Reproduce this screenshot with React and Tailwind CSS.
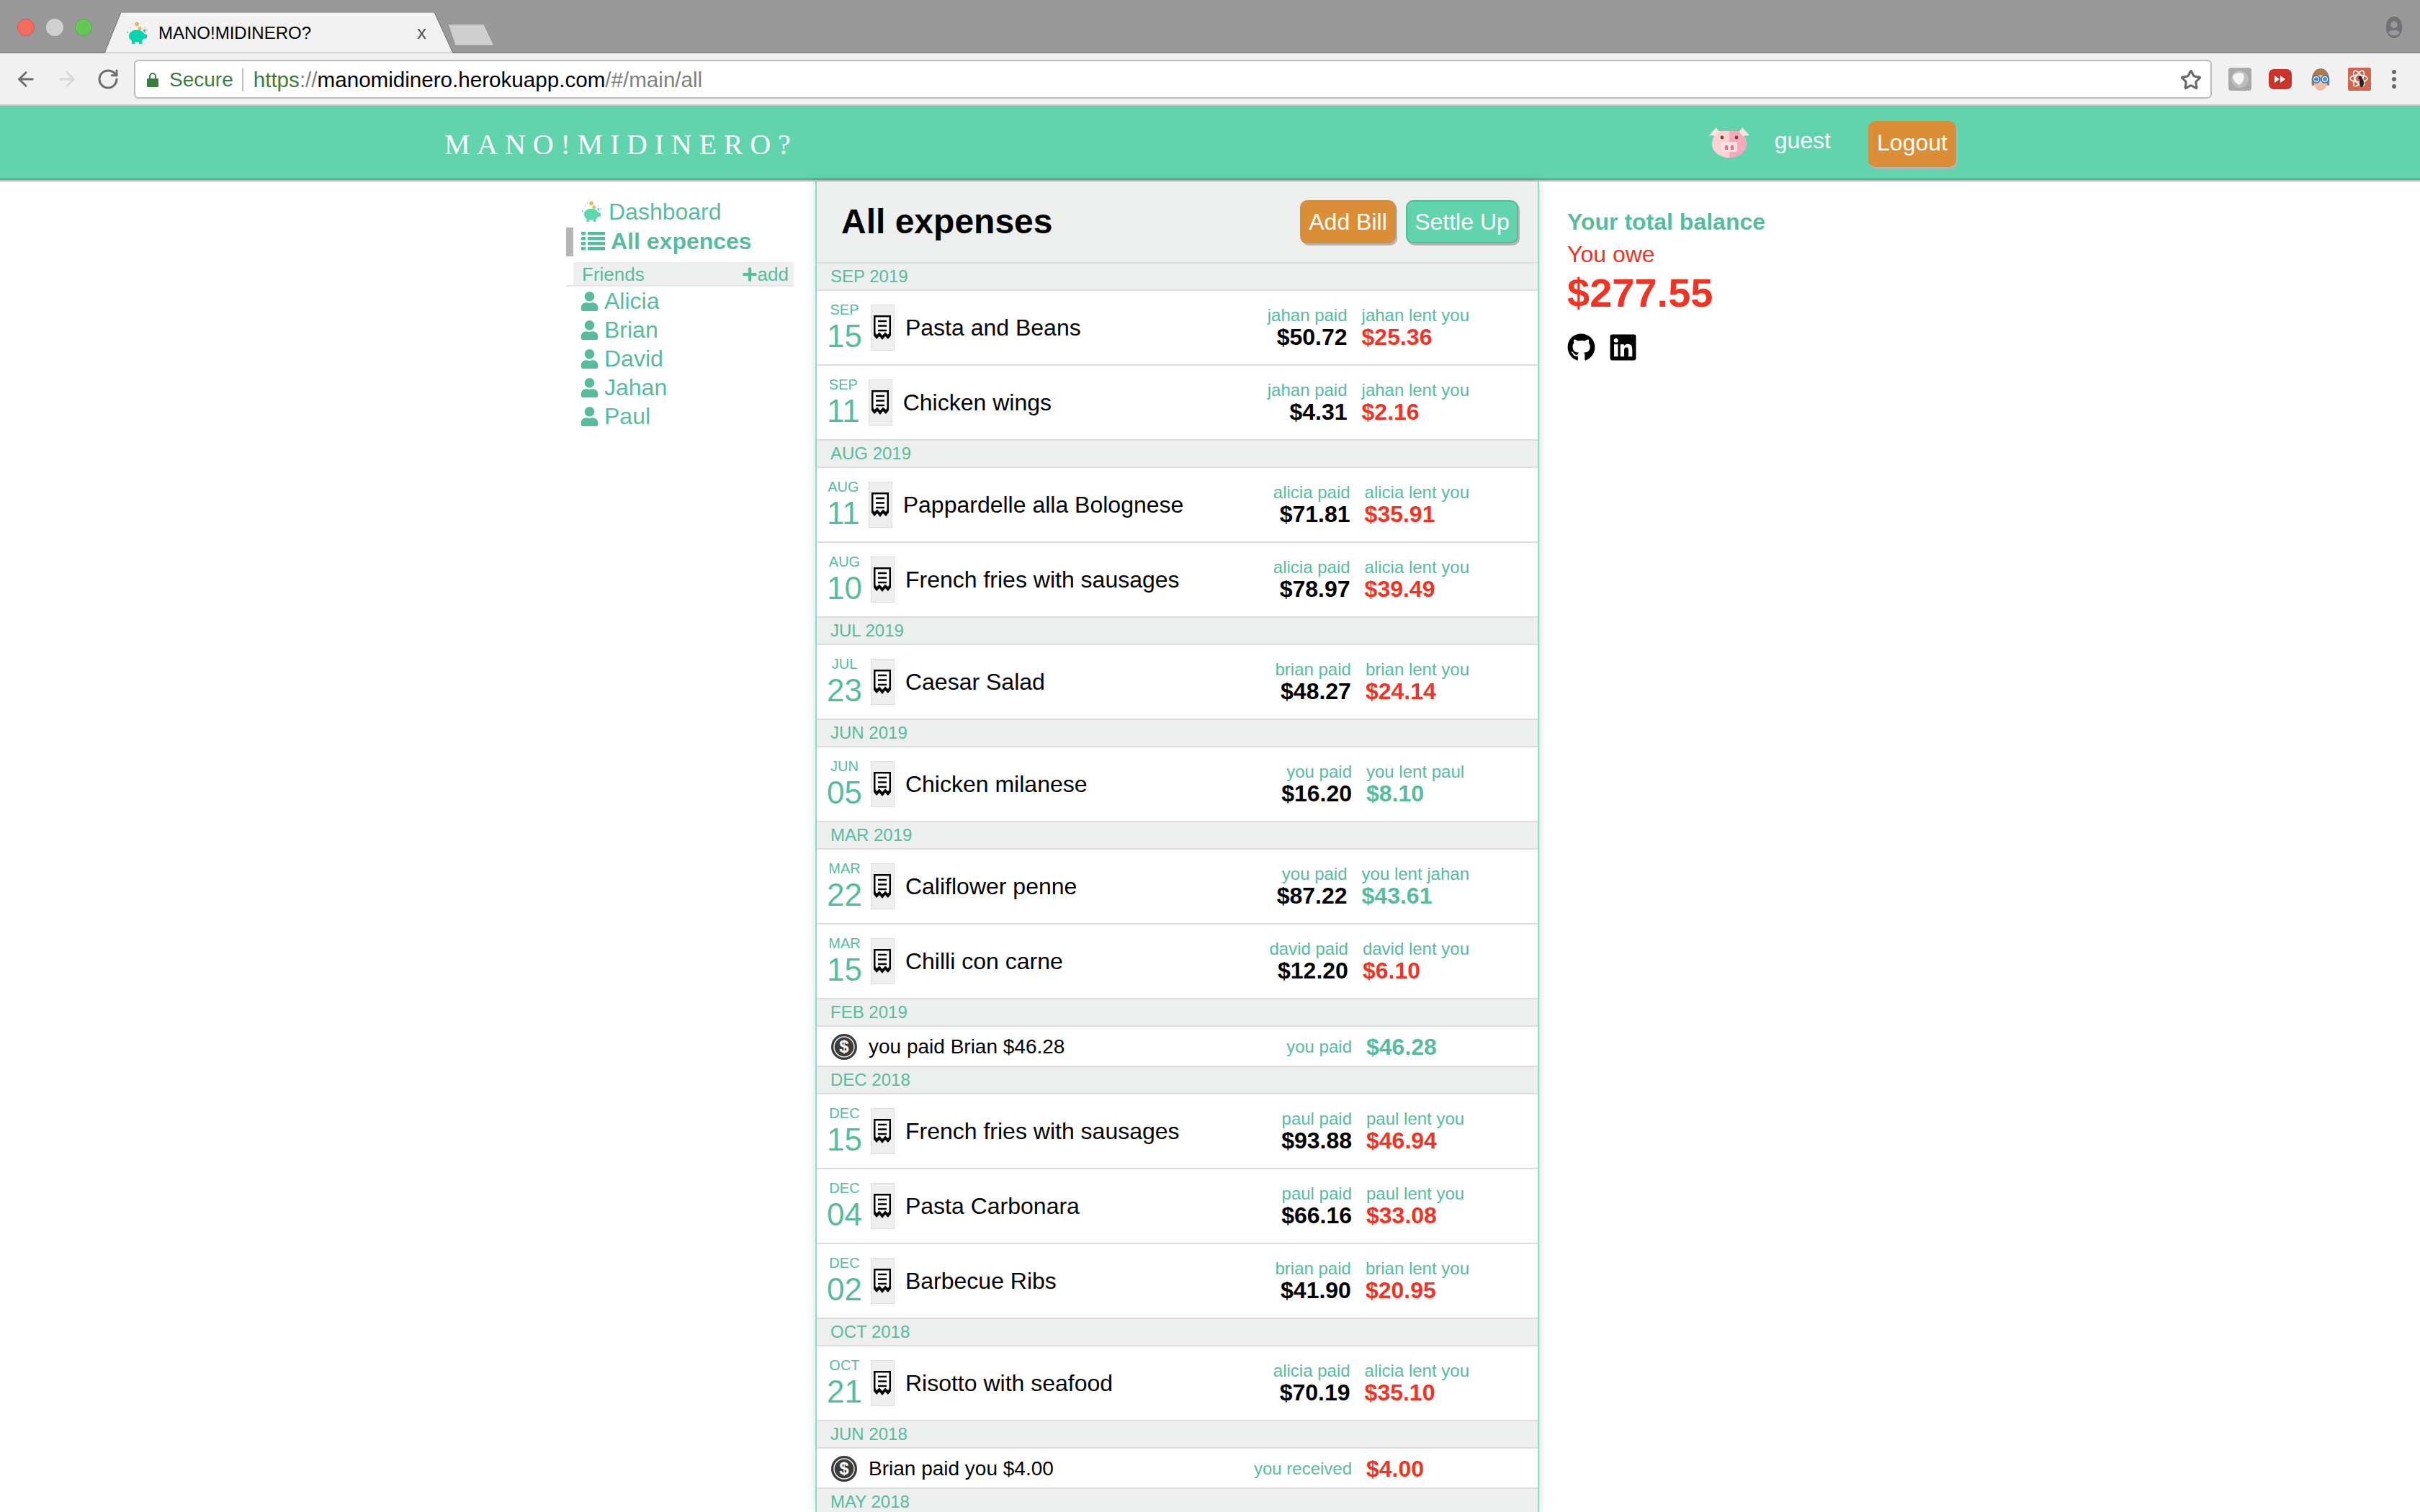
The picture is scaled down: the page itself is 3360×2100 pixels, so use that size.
import React from "react";
import { ArrowLeft, ArrowRight, RotateCw, Star } from "lucide-react";
import { FaGithub, FaLinkedin, FaUser, FaPlus } from "react-icons/fa";

const Piggy = ({ body = "#5fd6ae", className }) => (
  <svg viewBox="0 0 32 32" className={className}>
    <circle cx="15" cy="3.5" r="3" fill="#e9b46a" />
    <circle cx="19" cy="9.500" r="2.600" fill="#e9b46a" />
    <circle cx="6" cy="8" r="1" fill="#b9c6dd" />
    <circle cx="9" cy="3" r="0.8" fill="#b9c6dd" />
    <circle cx="2" cy="15" r="1" fill="#7d8fb5" />
    <circle cx="26" cy="8" r="1" fill="#b9c6dd" />
    <circle cx="29" cy="12" r="0.8" fill="#7d8fb5" />
    <ellipse cx="15" cy="20" rx="11" ry="8.500" fill={body} />
    <path d="M8 25h4v6H8zM18 25h4v6h-4zM23 12l4-2v6z" fill={body} />
    <path d="M25 17l4 1v5l-4 1z" fill={body} />
  </svg>
);

const PigFace = () => (
  <svg viewBox="0 0 56 42" className="w-[56px] h-[42px]">
    <path d="M28 5H14C8 9 4 15 4 23c0 11 11 19 24 19z" fill="#fbd2d2" />
    <path d="M28 5h14c6 4 10 10 10 18 0 11-11 19-24 19z" fill="#f3aabc" />
    <path d="M10 0L0 11l10 1 4-6z" fill="#fde3e3" />
    <path d="M46 0l10 11-10 1-4-6z" fill="#fde3e3" />
    <circle cx="18" cy="14" r="2.400" fill="#7a4420" />
    <circle cx="38" cy="14" r="2.400" fill="#7a4420" />
    <rect x="17" y="20" width="22" height="14" rx="3" fill="#fde0e0" />
    <rect x="22" y="25" width="4" height="6" fill="#d5768a" />
    <rect x="30" y="25" width="4" height="6" fill="#d5768a" />
  </svg>
);

const ListIcon = () => (
  <svg viewBox="0 0 33 26" className="w-[33px] h-[26px] shrink-0" fill="currentColor">
    <path d="M0 0h6v4.500H0zM9 0h24v4.500H9zM0 7h6v4.500H0zM9 7h24v4.500H9zM0 14h6v4.500H0zM9 14h24v4.500H9zM0 21h6v4.500H0zM9 21h24v4.500H9z" />
  </svg>
);

const Receipt = () => (
  <svg viewBox="0 0 24 34" className="w-[24px] h-[34px]">
    <path d="M0 0H24V28L20 33L16 29L12 34L8 29L4 33L0 28Z" fill="#000" />
    <path d="M2.5 2.5H21.500V24.500L20 27L16 23.500L12 28L8 23.500L4 27L2.500 24.500Z" fill="#fff" />
    <path d="M6 8H18M6 14.500H18M6 21H18" stroke="#000" strokeWidth="2.500" />
  </svg>
);

const Coin = () => (
  <svg viewBox="0 0 36 36" className="w-[36px] h-[36px] shrink-0">
    <circle cx="18" cy="18" r="18" fill="#3b3b3b" />
    <circle cx="18" cy="18" r="14" fill="none" stroke="#e8e8e8" strokeWidth="1.500" />
    <text x="18" y="26" textAnchor="middle" fontSize="24" fontWeight="700" fill="#fff" fontFamily="Liberation Sans">$</text>
  </svg>
);

const Exts = () => (
  <div className="flex items-center ml-[23px]">
    <svg viewBox="0 0 32 32" className="w-[32px] h-[32px]">
      <rect width="32" height="32" rx="4" fill="#a9a9a9" />
      <circle cx="16" cy="16" r="12" fill="#bdbdbd" />
      <path d="M6 12c2-5 12-6 15-3 2 5-1 13-6 15-5-2-9-7-9-12z" fill="#f5f5f5" />
    </svg>
    <svg viewBox="0 0 32 32" className="w-[32px] h-[32px] ml-[24px]">
      <rect y="2" width="32" height="28" rx="7" fill="#c9352a" />
      <path d="M8 11l7 5-7 5zM16 11l7 5-7 5z" fill="#fff" />
    </svg>
    <svg viewBox="0 0 32 32" className="w-[32px] h-[32px] ml-[24px]">
      <path d="M4 25C2 9 8 1 16 1s14 8 12 24l-5-1H9z" fill="#a9784d" />
      <ellipse cx="16" cy="21" rx="9" ry="11" fill="#f0bda0" />
      <circle cx="10" cy="16" r="5" fill="#fff" stroke="#1d6fd0" strokeWidth="1.500" />
      <circle cx="22" cy="16" r="5" fill="#fff" stroke="#1d6fd0" strokeWidth="1.500" />
      <circle cx="10" cy="16" r="3" fill="#4a90e2" />
      <circle cx="22" cy="16" r="3" fill="#4a90e2" />
    </svg>
    <svg viewBox="0 0 32 32" className="w-[32px] h-[32px] ml-[22px]">
      <rect width="32" height="32" rx="2" fill="#d1654e" />
      <g fill="none" stroke="#fff" strokeWidth="1.500">
        <ellipse cx="15" cy="15" rx="12" ry="5" />
        <ellipse cx="15" cy="15" rx="12" ry="5" transform="rotate(60 15 15)" />
        <ellipse cx="15" cy="15" rx="12" ry="5" transform="rotate(120 15 15)" />
      </g>
      <circle cx="17" cy="14" r="2.500" fill="#222" />
      <ellipse cx="19" cy="21" rx="3" ry="6" fill="#222" />
    </svg>
    <div className="flex flex-col gap-[4px] ml-[29px] mr-[33px]">
      <span className="w-[6px] h-[6px] rounded-full bg-[#666a6e]" />
      <span className="w-[6px] h-[6px] rounded-full bg-[#666a6e]" />
      <span className="w-[6px] h-[6px] rounded-full bg-[#666a6e]" />
    </div>
  </div>
);

const Chrome = () => (
  <>
    <div className="h-[74px] bg-[#999999] border-b border-[#6f6f6f] flex items-start relative">
      <div className="flex gap-[16px] pl-[24px] pt-[26px]">
        <span className="w-[24px] h-[24px] rounded-full bg-[#f46c60] border border-[#d9534a]" />
        <span className="w-[24px] h-[24px] rounded-full bg-[#d0d0d0]" />
        <span className="w-[24px] h-[24px] rounded-full bg-[#64c854] border border-[#52ae44]" />
      </div>
      <div className="relative w-[484px] h-[57px] mt-[17px] ml-[17px] flex items-center pl-[30px]">
        <svg viewBox="0 0 484 57" className="absolute inset-0 w-[484px] h-[57px]">
          <path d="M0 57L23 0H458L484 57Z" fill="#f2f2f2" stroke="#707070" strokeWidth="1" />
        </svg>
        <Piggy body="#08d3ae" className="relative w-[32px] h-[32px]" />
        <span className="relative text-[24px] ml-[13px] text-black">MANO!MIDINERO?</span>
        <span className="absolute left-[434px] top-[15px] text-[26px] leading-[26px] text-[#555]">x</span>
      </div>
      <svg viewBox="0 0 64 30" className="w-[64px] h-[31px] mt-[33px] -ml-[7px]">
        <path d="M0 0H50L64 30H10Z" fill="#cecece" stroke="#8a8a8a" strokeWidth="1" />
      </svg>
      <svg viewBox="0 0 24 32" className="w-[24px] h-[30px] ml-auto mr-[24px] mt-[23px]">
        <path d="M12 0C19 0 24 7 24 16S19 32 12 32 0 25 0 16 5 0 12 0z" fill="#6f7378" />
        <circle cx="12" cy="12" r="5" fill="#999" />
        <ellipse cx="12" cy="24" rx="8" ry="4" fill="#999" />
      </svg>
    </div>
    <div className="h-[73px] bg-[#f1f1f1] border-b-2 border-[#c8c8c8] flex items-center pl-[20px] pt-px">
      <ArrowLeft size={32} strokeWidth={2.200} className="text-[#6a6e72]" />
      <ArrowRight size={32} strokeWidth={2.200} className="text-[#d8d8d8] ml-[25px]" />
      <RotateCw size={32} strokeWidth={2.200} className="text-[#6a6e72] ml-[25px]" />
      <div className="ml-[20px] flex-1 h-[54px] bg-white border-2 border-[#bbbbbb] rounded-[6px] flex items-center text-[28px] pl-[16px] pr-[12px] pt-[2px]">
        <svg viewBox="0 0 16 20" className="w-[16px] h-[20px]">
          <rect y="8" width="16" height="12" rx="1" fill="#3a7d3e" />
          <path d="M4 9V5a4 4 0 018 0v4" fill="none" stroke="#3a7d3e" strokeWidth="2" />
        </svg>
        <span className="ml-[15px] text-[#3a7d3e]">Secure</span>
        <span className="ml-[12px] w-[2px] h-[32px] bg-[#bfbfbf]" />
        <span className="ml-[14px] text-[29.600px]">
          <span className="text-[#3a7d3e]">https</span>
          <span className="text-[#808080]">://</span>
          <span className="text-black">manomidinero.herokuapp.com</span>
          <span className="text-[#808080]">/#/main/all</span>
        </span>
        <Star size={30} strokeWidth={2.500} className="ml-auto text-[#666a6e]" />
      </div>
      <Exts />
    </div>
  </>
);

const Header = () => (
  <div className="h-[103px] bg-[#61d4ae] border-b-[3px] border-b-[#56b99a] flex items-center pl-[617px] pr-[644px] text-white">
    <span className="mt-[8px] [font-family:'Liberation_Serif',serif] text-[40px] tracking-[9.800px]">MANO!MIDINERO?</span>
    <div className="ml-auto mt-[2px]"><PigFace /></div>
    <span className="text-[32px] ml-[35px] mb-[4px]">guest</span>
    <button className="ml-[52px] mt-[6px] pb-[5px] w-[122px] h-[64px] text-[32px] rounded-[10px] bg-[#db8e36] border-2 border-[#cc9040] text-white shadow-[2px_3px_0_#b5b5b5]">Logout</button>
  </div>
);

const friends = ["Alicia", "Brian", "David", "Jahan", "Paul"];

const Sidebar = () => (
  <div className="w-[316px] mr-[30px] shrink-0 text-[#56bc9d] pt-[23px]">
    <div className="h-[41px] pb-[4px] flex items-center pl-[21px]">
      <Piggy className="w-[30px] h-[30px]" />
      <span className="text-[32px] ml-[8px]">Dashboard</span>
    </div>
    <div className="h-[40px] pb-[2px] flex items-center border-l-[10px] border-[#b5b5b5] pl-[11px]">
      <ListIcon />
      <span className="text-[32px] font-bold ml-[8px]">All expences</span>
    </div>
    <div className="mt-[8px] border-b-2 border-[#e6e8e7]">
      <div className="ml-[10px] h-[32px] pt-[2px] bg-[#eef0ef] flex items-center justify-between pl-[12px] pr-[7px] text-[26px]">
        <span>Friends</span>
        <span className="flex items-center"><FaPlus size={22} />add</span>
      </div>
    </div>
    {friends.map((f) => (
      <div key={f} className="h-[40px] flex items-center pl-[21px]">
        <FaUser size={27} className="-ml-[2px]" />
        <span className="text-[32px] ml-[7px]">{f}</span>
      </div>
    ))}
  </div>
);

const m = (t) => ({ kind: "month", t });
const b = (mon, day, name, p, pa, l, la, green) => ({ kind: "bill", mon, day, name, p, pa, l, la, green });
const s = (name, l, la, green) => ({ kind: "settle", name, l, la, green });

const items = [
  m("SEP 2019"),
  b("SEP", "15", "Pasta and Beans", "jahan paid", "$50.72", "jahan lent you", "$25.36"),
  b("SEP", "11", "Chicken wings", "jahan paid", "$4.31", "jahan lent you", "$2.16"),
  m("AUG 2019"),
  b("AUG", "11", "Pappardelle alla Bolognese", "alicia paid", "$71.81", "alicia lent you", "$35.91"),
  b("AUG", "10", "French fries with sausages", "alicia paid", "$78.97", "alicia lent you", "$39.49"),
  m("JUL 2019"),
  b("JUL", "23", "Caesar Salad", "brian paid", "$48.27", "brian lent you", "$24.14"),
  m("JUN 2019"),
  b("JUN", "05", "Chicken milanese", "you paid", "$16.20", "you lent paul", "$8.10", true),
  m("MAR 2019"),
  b("MAR", "22", "Califlower penne", "you paid", "$87.22", "you lent jahan", "$43.61", true),
  b("MAR", "15", "Chilli con carne", "david paid", "$12.20", "david lent you", "$6.10"),
  m("FEB 2019"),
  s("you paid Brian $46.28", "you paid", "$46.28", true),
  m("DEC 2018"),
  b("DEC", "15", "French fries with sausages", "paul paid", "$93.88", "paul lent you", "$46.94"),
  b("DEC", "04", "Pasta Carbonara", "paul paid", "$66.16", "paul lent you", "$33.08"),
  b("DEC", "02", "Barbecue Ribs", "brian paid", "$41.90", "brian lent you", "$20.95"),
  m("OCT 2018"),
  b("OCT", "21", "Risotto with seafood", "alicia paid", "$70.19", "alicia lent you", "$35.10"),
  m("JUN 2018"),
  s("Brian paid you $4.00", "you received", "$4.00"),
  m("MAY 2018"),
];

const Row = ({ it }) => {
  if (it.kind === "month")
    return (
      <div className="h-[38px] shrink-0 bg-[#edefee] border-b-2 border-[#dcdedd] flex items-center pl-[19px] text-[24px] text-[#56bc9d]">{it.t}</div>
    );
  if (it.kind === "settle")
    return (
      <div className="h-[56px] shrink-0 bg-white border-b-2 border-[#dcdedd] flex items-center pl-[20px] pr-[95px] pt-[2px]">
        <Coin />
        <span className="text-[28px] ml-[16px] text-black">{it.name}</span>
        <span className="ml-auto text-[24px] text-[#56bc9d]">{it.l}</span>
        <span className={`ml-[20px] w-[143px] text-[32px] font-bold ${it.green ? "text-[#56bc9d]" : "text-[#ef3423]"}`}>{it.la}</span>
      </div>
    );
  return (
    <div className="h-[104px] shrink-0 bg-white border-b-2 border-[#dcdedd] flex items-center pl-[14px] pr-[95px]">
      <div className="flex flex-col items-center text-[#56bc9d]">
        <span className="text-[20px] leading-[20px]">{it.mon}</span>
        <span className="text-[44px] leading-[46px] mt-[4px]">{it.day}</span>
      </div>
      <div className="ml-[12px] w-[33px] h-[64px] bg-[#eeeeee] border border-[#dddddd] flex items-center justify-center">
        <Receipt />
      </div>
      <span className="ml-[15px] text-[32px] text-black">{it.name}</span>
      <div className="ml-auto flex">
        <div className="flex flex-col items-end">
          <span className="text-[24px] leading-[30px] text-[#56bc9d]">{it.p}</span>
          <span className="text-[32px] leading-[30px] pb-[4px] font-bold text-black">{it.pa}</span>
        </div>
        <div className="ml-[20px] min-w-[143px] flex flex-col">
          <span className="text-[24px] leading-[30px] text-[#56bc9d]">{it.l}</span>
          <span className={`text-[32px] leading-[30px] pb-[4px] font-bold ${it.green ? "text-[#56bc9d]" : "text-[#ef3423]"}`}>{it.la}</span>
        </div>
      </div>
    </div>
  );
};

const Panel = () => (
  <div className="w-[1005px] shrink-0 flex flex-col border-x-2 border-[#7fe6c5] shadow-[0_0_14px_rgba(0,0,0,0.12)] overflow-hidden">
    <div className="h-[114px] shrink-0 bg-[#edefee] border-b-2 border-[#dcdedd] flex items-center pl-[34px] pr-[27px]">
      <h1 className="text-[48px] font-bold text-black">All expenses</h1>
      <button className="ml-auto w-[133px] h-[60px] rounded-[10px] text-[32px] text-white bg-[#db8e36] border-2 border-[#cc9040] shadow-[2px_3px_0_#b5b5b5]">Add Bill</button>
      <button className="ml-[14px] w-[156px] h-[60px] rounded-[10px] text-[32px] text-white bg-[#61d4ae] border-2 border-[#56b99a] shadow-[2px_3px_0_#b5b5b5]">Settle Up</button>
    </div>
    {items.map((it, i) => <Row key={i} it={it} />)}
  </div>
);

const Balance = () => (
  <div className="pl-[39px] pt-[38px]">
    <div className="text-[32px] leading-[36px] font-bold text-[#56bc9d]">Your total balance</div>
    <div className="text-[32px] leading-[36px] mt-[9px] text-[#ef3423]">You owe</div>
    <div className="text-[56px] leading-[64px] mt-[4px] font-bold text-[#ef3423]">$277.55</div>
    <div className="flex items-center gap-[18px] mt-[23px] text-black">
      <FaGithub size={39} />
      <FaLinkedin size={41} />
    </div>
  </div>
);

export default function App() {
  return (
    <div className="w-[3360px] h-[2100px] overflow-hidden bg-white flex flex-col [font-family:'Liberation_Sans',sans-serif]">
      <Chrome />
      <Header />
      <div className="flex-1 min-h-0 flex pl-[786px] border-t-2 border-[#b9b9b9]">
        <Sidebar />
        <Panel />
        <Balance />
      </div>
    </div>
  );
}
